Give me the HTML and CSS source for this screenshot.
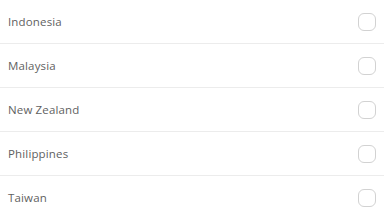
FILE: index.html
```html
<!DOCTYPE html>
<html lang="en">
<head>
    <meta charset="UTF-8">
    <meta name="viewport" content="width=device-width, initial-scale=1.0">
    <title>Select Country</title>
    <link rel="stylesheet" href="styles.css">
</head>
<body>
    <ul class="country-list">
        <li class="country-row"><span class="country-name">Indonesia</span><span class="check"></span></li>
        <li class="country-row"><span class="country-name">Malaysia</span><span class="check"></span></li>
        <li class="country-row"><span class="country-name">New Zealand</span><span class="check"></span></li>
        <li class="country-row"><span class="country-name">Philippines</span><span class="check"></span></li>
        <li class="country-row"><span class="country-name">Taiwan</span><span class="check"></span></li>
    </ul>
</body>
</html>
```

FILE: styles.css
```css
body {
    font-family: "Open Sans", Arial, sans-serif;
    margin: 0;
    padding: 0;
    background-color: #fff;
}
.country-list {
    list-style: none;
    margin: 0;
    padding: 0;
}
.country-row {
    display: flex;
    align-items: center;
    justify-content: space-between;
    height: 43px;
    padding: 0 8px 0 8px;
    border-bottom: 1px solid #ececec;
}
.country-name {
    font-size: 11.5px;
    letter-spacing: 0.15px;
    color: #5f5f5f;
}
.check {
    width: 16px;
    height: 16px;
    border: 1px solid #d2d2d2;
    border-radius: 6px;
}
```
